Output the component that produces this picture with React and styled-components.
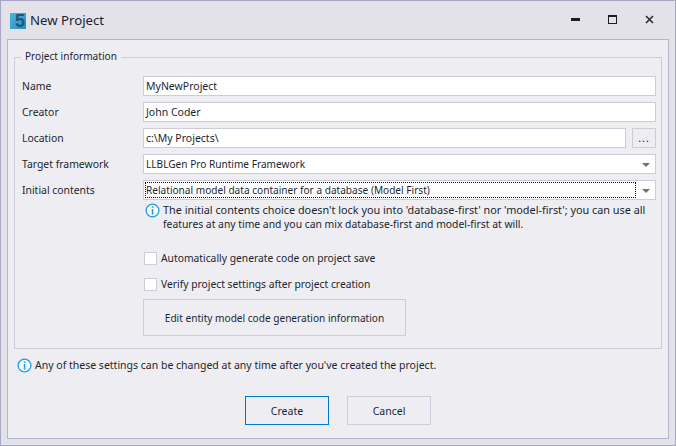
import React from "react";
import styled, { createGlobalStyle } from "styled-components";

const Global = createGlobalStyle`
  html, body { margin: 0; padding: 0; background: #e2e2e8; }
  * { box-sizing: border-box; }
`;

const Win = styled.div`
  width: 676px; height: 446px; background: #e2e2e8; border: 1px solid #a6a9c6;
  display: flex; flex-direction: column; overflow: hidden;
  font-family: "Noto Sans", "Open Sans", sans-serif; font-size: 10.5px; color: #1b1f30;
`;
const TitleBar = styled.div`
  height: 38px; flex: none; display: flex; align-items: center; padding: 0 7px 0 9px;
`;
const Logo = styled.div`
  width: 16px; height: 16px; margin-top: 1px; background: linear-gradient(135deg, #4db5de, #2f8cb8);
  display: flex; align-items: center; justify-content: flex-end; padding-right: 1px;
  font-size: 18px; font-weight: 700; color: #17597c; line-height: 16px; font-family: "Liberation Sans", sans-serif;
`;
const Title = styled.div`
  font-size: 13.2px; margin-left: 4px; color: #1c2233; flex: 1;
`;
const WinBtn = styled.div`
  width: 37px; height: 30px; display: flex; align-items: center; justify-content: center;
`;
const Panel = styled.div`
  margin: 0 6px; height: 400px; flex: none; background: #eeeef2; border: 1px solid #b4b5cc;
  padding: 9px 6px 0 6px; display: flex; flex-direction: column;
`;
const Group = styled.fieldset`
  margin: 0; padding: 11px 5px 0 8px; height: 300px; border: 1px solid #ccccda; min-width: 0;
`;
const Legend = styled.legend`
  padding: 0 4px 2px; margin-left: -2px; line-height: 14px; font-size: 10.1px;
`;
const Row = styled.div`
  display: grid; grid-template-columns: 120px 1fr; height: 20px; margin-bottom: 6px; align-items: center;
`;
const Label = styled.div`font-size: 10.4px; margin-left: -1px;`;
const Input = styled.div`
  height: 20px; background: #fff; border: 1px solid #ccccda; padding: 0 2px; line-height: 18px; flex: 1; white-space: nowrap;
`;
const InputPair = styled.div`display: flex; gap: 6px;`;
const Browse = styled.div`
  width: 24px; height: 20px; border: 1px solid #ccccda; text-align: center; line-height: 18px; letter-spacing: 1px;
`;
const Select = styled.div`
  height: 20px; background: #fff; border: 1px solid #ccccda; display: flex; align-items: center; padding: 1px;
`;
const SelectText = styled.div`
  flex: 1; height: 16px; line-height: 14px; white-space: nowrap; font-size: 10.1px;
  border: 1px dotted ${p => (p.$focused ? "#111" : "transparent")};
`;
const Arrow = styled.div`
  width: 0; height: 0; margin: 1px 4px 0 6px; border-left: 4px solid transparent; border-right: 4px solid transparent; border-top: 4px solid #707070;
`;
const Note = styled.div`
  display: flex; margin: ${p => p.$mt}px 0 0 ${p => p.$indent}px; gap: 3px; line-height: 14px; white-space: nowrap;
`;
const NoteLine = styled.div`
  font-size: ${p => p.$size}px;
`;
const Body = styled.div`padding-left: 120px;`;
const CheckRow = styled.div`
  display: flex; align-items: center; gap: 4px; height: 14px; margin-left: 1px; font-size: 10.3px;
  margin-top: ${p => p.$mt}px;
`;
const Check = styled.div`
  width: 13px; height: 13px; background: #fff; border: 1px solid #ccccda;
`;
const Wide = styled.div`
  width: 263px; height: 37px; margin-top: 8px; border: 1px solid #ccccda; font-size: 10.1px;
  display: flex; align-items: center; justify-content: center;
`;
const Footer = styled.div`
  display: flex; justify-content: center; gap: 18px; margin-top: 23px;
`;
const Btn = styled.div`
  width: 84px; height: 29px; display: flex; align-items: center; justify-content: center;
  border: 1px solid ${p => (p.$primary ? "#0078d0" : "#ccccda")};
`;

const Info = () => (
  <svg width="15" height="15" viewBox="0 0 16 16" style={{ flex: "none" }}>
    <circle cx="8" cy="8" r="6.8" fill="#fff" stroke="#1ba1e2" strokeWidth="1.4" />
    <rect x="7.2" y="3.6" width="1.7" height="1.7" fill="#1ba1e2" />
    <rect x="7.2" y="6.4" width="1.7" height="6" fill="#1ba1e2" />
  </svg>
);

export default function App() {
  return (
    <>
      <Global />
      <Win>
        <TitleBar>
          <Logo>5</Logo>
          <Title>New Project</Title>
          <WinBtn>
            <svg width="10" height="4" viewBox="0 0 10 4"><rect width="9" height="3" fill="#1c1c24" /></svg>
          </WinBtn>
          <WinBtn>
            <svg width="10" height="10" viewBox="0 0 10 10"><rect x=".5" y=".5" width="8" height="8" fill="none" stroke="#1c1c24" /><rect width="9" height="2" fill="#1c1c24" /></svg>
          </WinBtn>
          <WinBtn>
            <svg width="10" height="10" viewBox="0 0 10 10"><path d="M1 1l7 7M8 1L1 8" stroke="#2a2a32" strokeWidth="1.6" fill="none" /></svg>
          </WinBtn>
        </TitleBar>
        <Panel>
          <Group>
            <Legend>Project information</Legend>
            <Row><Label>Name</Label><Input>MyNewProject</Input></Row>
            <Row><Label>Creator</Label><Input>John Coder</Input></Row>
            <Row>
              <Label>Location</Label>
              <InputPair><Input>c:\My Projects\</Input><Browse>...</Browse></InputPair>
            </Row>
            <Row>
              <Label>Target framework</Label>
              <Select><SelectText>LLBLGen Pro Runtime Framework</SelectText><Arrow /></Select>
            </Row>
            <Row>
              <Label>Initial contents</Label>
              <Select><SelectText $focused>Relational model data container for a database (Model First)</SelectText><Arrow /></Select>
            </Row>
            <Body>
              <Note $indent={2} $mt={-3}>
                <Info />
                <div>
                  <NoteLine $size={10.85}>The initial contents choice doesn't lock you into 'database-first' nor 'model-first'; you can use all</NoteLine>
                  <NoteLine $size={10.35}>features at any time and you can mix database-first and model-first at will.</NoteLine>
                </div>
              </Note>
              <CheckRow $mt={20}><Check />Automatically generate code on project save</CheckRow>
              <CheckRow $mt={12}><Check />Verify project settings after project creation</CheckRow>
              <Wide>Edit entity model code generation information</Wide>
            </Body>
          </Group>
          <Note $indent={3} $mt={9}>
            <Info />
            <NoteLine $size={10.5}>Any of these settings can be changed at any time after you've created the project.</NoteLine>
          </Note>
          <Footer><Btn $primary>Create</Btn><Btn>Cancel</Btn></Footer>
        </Panel>
      </Win>
    </>
  );
}
